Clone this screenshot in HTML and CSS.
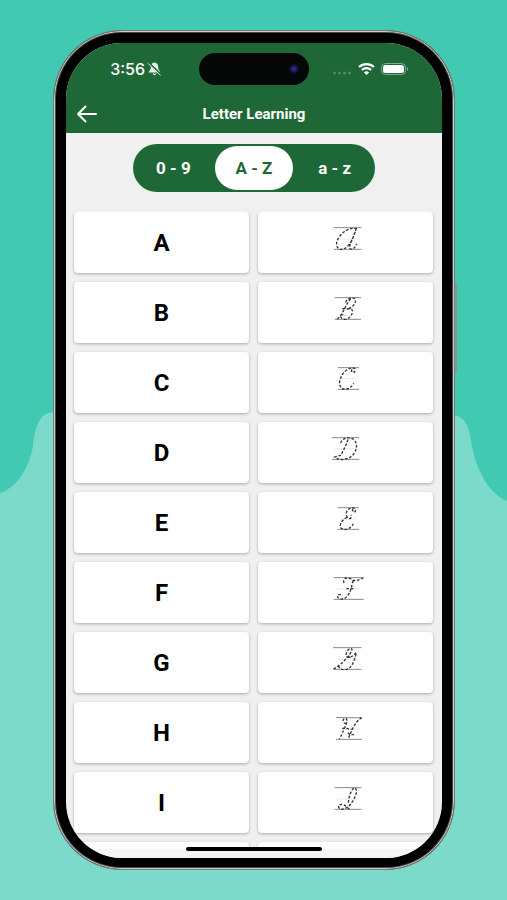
FILE: index.html
```html
<!DOCTYPE html>
<html lang="en">

<head>
    <meta charset="UTF-8">
    <meta name="viewport" content="width=device-width, initial-scale=1">
    <title>Letter Learning</title>
    <link rel="stylesheet" href="styles.css">
</head>

<body>
    <svg class="wave" viewBox="0 0 507 900" preserveAspectRatio="none" aria-hidden="true">
        <path d="M0 493C16 488 29 469 33 446C35 426 40 412 54 412L454 415C465 417 469 427 471 440C475 468 488 493 507 501V900H0Z" fill="#7cdaca" />
    </svg>

    <div class="phone">
        <div class="side-button"></div>
        <main class="screen">
            <header class="header">
                <div class="status">
                    <div class="status-left">
                        <span class="time">3:56</span>
                        <svg width="15" height="14" viewBox="0 0 15 14" aria-hidden="true">
                            <path d="M7.5 .5C4.8 .5 3.8 2.7 3.8 5.2C3.8 7.8 2.4 8.6 1.8 9.8V10.6H13.2V9.8C12.6 8.6 11.2 7.8 11.2 5.2C11.2 2.7 10.2 .5 7.5 .5ZM5.6 11.5H9.4C9 13.8 6 13.8 5.6 11.5Z" fill="#e6efe8" />
                            <path d="M1.8 1L13.8 12.5" stroke="#1d6836" stroke-width="2" />
                            <path d="M1 1.4L13.2 13" stroke="#e6efe8" stroke-width="1" stroke-linecap="round" />
                        </svg>
                    </div>
                    <div class="island"><span class="camera"></span></div>
                    <div class="status-right">
                        <svg class="signal" width="20" height="12" viewBox="0 0 20 12" aria-hidden="true">
                            <circle cx="2.5" cy="10" r="1.5" />
                            <circle cx="7.5" cy="10" r="1.5" />
                            <circle cx="12.5" cy="10" r="1.5" />
                            <circle cx="17.5" cy="10" r="1.5" />
                        </svg>
                        <svg width="17" height="12" viewBox="0 0 17 12" fill="none" stroke="#fff" stroke-width="2.1" aria-hidden="true">
                            <path d="M1 4.1C5.2 .1 11.8 .1 16 4.1" />
                            <path d="M3.8 7C6.5 4.5 10.5 4.5 13.2 7" />
                            <path d="M8.5 12L5.9 9.4C7.4 8 9.6 8 11.1 9.4Z" fill="#fff" stroke="none" />
                        </svg>
                        <svg width="28" height="12" viewBox="0 0 28 12" aria-hidden="true">
                            <rect x=".5" y=".5" width="24" height="11" rx="4" fill="none" stroke="#82aa8f" />
                            <rect x="2" y="2" width="21" height="8" rx="2.5" fill="#fff" />
                            <path d="M26 4C27.6 4.500 27.6 7.500 26 8Z" fill="#82aa8f" />
                        </svg>
                    </div>
                </div>
                <div class="title-bar">
                    <button class="back" type="button" aria-label="Back">
                        <svg width="22" height="18" viewBox="0 0 22 18" fill="none" stroke="#fff" stroke-width="2" stroke-linecap="round" stroke-linejoin="round">
                            <path d="M20 9H2M9.500 1.500L2 9L9.500 16.500" />
                        </svg>
                    </button>
                    <h1 class="title">Letter Learning</h1>
                </div>
            </header>

            <nav class="tabs">
                <button class="tab" type="button">0 - 9</button>
                <button class="tab active" type="button">A - Z</button>
                <button class="tab" type="button">a - z</button>
            </nav>

            <div class="letters">
                <div class="card">A</div>
                <div class="card">
                    <svg class="trace" viewBox="17 33 120 78" aria-label="A">
                        <path class="line" d="M40 38H123M40 103H123" />
                        <path class="middle" d="M48 72H119" />
                        <path class="letter" d="M110 41C80 35 55 60 49 82C46 104 65 110 82 94C96 78 100 62 107 43C101 65 88 86 87 98C94 109 104 99 109 86" />
                    </svg>
                </div>
                <div class="card">B</div>
                <div class="card">
                    <svg class="trace" viewBox="17 33 120 78" aria-label="B">
                        <path class="line" d="M43 38H122M43 103H122" />
                        <path class="middle" d="M57 71H114" />
                        <path class="letter" d="M76 52C82 38 100 34 105 43C108 57 96 68 80 72C98 68 101 80 91 93C82 106 65 107 60 93C62 87 69 88 75 92M51 102C70 86 74 61 91 41M66 71H80" />
                    </svg>
                </div>
                <div class="card">C</div>
                <div class="card">
                    <svg class="trace" viewBox="17 33 120 78" aria-label="C">
                        <path class="line" d="M52 38H116M52 103H116" />
                        <path class="middle" d="M63 71H108" />
                        <path class="letter" d="M94 43V51H103V40C82 34 61 58 58 80C56 99 69 106 83 101C91 98 96 92 100 85" />
                    </svg>
                </div>
                <div class="card">D</div>
                <div class="card">
                    <svg class="trace" viewBox="17 33 120 78" aria-label="D">
                        <path class="line" d="M35 38H117M35 103H117" />
                        <path class="middle" d="M43 71H109" />
                        <path class="letter" d="M61 54C65 38 88 34 101 44C119 64 102 95 80 101C66 106 51 104 43 96C54 91 62 95 65 84C72 70 80 57 83 41" />
                    </svg>
                </div>
                <div class="card">E</div>
                <div class="card">
                    <svg class="trace" viewBox="17 33 120 78" aria-label="E">
                        <path class="line" d="M52 38H116M52 103H116" />
                        <path class="middle" d="M61 72H108" />
                        <path class="letter" d="M96 42L99 51C105 54 107 46 104 40C87 33 72 51 80 65C88 76 97 68 91 60M80 67C63 75 56 91 62 99C76 111 94 97 99 86" />
                    </svg>
                </div>
                <div class="card">F</div>
                <div class="card">
                    <svg class="trace" viewBox="17 33 120 78" aria-label="F">
                        <path class="line" d="M40 38H130M40 103H130" />
                        <path class="middle" d="M50 72H121" />
                        <path class="letter" d="M71 54C66 39 80 36 92 42C105 52 117 44 129 39M98 47L92 72C87 87 77 101 67 102C54 104 47 93 54 89H64M78 71H103" />
                    </svg>
                </div>
                <div class="card">G</div>
                <div class="card">
                    <svg class="trace" viewBox="17 33 120 78" aria-label="G">
                        <path class="line" d="M38 38H123M38 103H123" />
                        <path class="middle" d="M54 72H114" />
                        <path class="letter" d="M40 102C64 88 91 60 95 43C88 34 76 52 77 63C85 73 98 63 108 53C103 78 93 103 75 104C59 106 52 93 55 87M82 66L94 68" />
                    </svg>
                </div>
                <div class="card">H</div>
                <div class="card">
                    <svg class="trace" viewBox="17 33 120 78" aria-label="H">
                        <path class="line" d="M47 38H125M47 103H125" />
                        <path class="middle" d="M55 72H120" />
                        <path class="letter" d="M78 55C66 57 65 40 76 40C86 45 76 60 58 102M124 38C106 48 94 75 84 101M66 71C78 64 85 77 97 72M83 83L88 89H103" />
                    </svg>
                </div>
                <div class="card">I</div>
                <div class="card">
                    <svg class="trace" viewBox="17 33 120 78" aria-label="I">
                        <path class="line" d="M43 38H123M43 103H123" />
                        <path class="middle" d="M50 72H116" />
                        <path class="letter" d="M84 83C86 61 94 38 105 39C114 50 102 73 91 87C80 102 61 108 55 97C53 87 66 86 73 91L88 103" />
                    </svg>
                </div>
                <div class="card"></div>
                <div class="card"></div>
            </div>

            <div class="safe-area"></div>
            <div class="home-indicator"></div>
        </main>
    </div>
</body>

</html>
```

FILE: styles.css
```css
* {
    box-sizing: border-box;
}

body {
    margin: 0;
    height: 100vh;
    padding: 30px 52px 30px 53px;
    background-color: #41c9b1;
    font-family: Roboto, sans-serif;
    overflow: hidden;
}

button {
    border: none;
    padding: 0;
    background: none;
    font-family: inherit;
    cursor: pointer;
}

.wave {
    position: absolute;
    top: 0;
    left: 0;
    width: 100%;
    height: 100%;
}

.phone {
    position: relative;
    height: 100%;
    padding: 12px 12px 11px;
    background-color: #000;
    border: 1px solid #777c7a;
    border-radius: 69px;
    box-shadow: inset 0 0 0 1px #d0cdcd, inset 0 0 0 2px #494747;
}

.side-button {
    position: absolute;
    top: 252px;
    right: -3px;
    width: 2px;
    height: 90px;
    background-color: #8b9794;
    border-radius: 0 2px 2px 0;
}

.screen {
    position: relative;
    display: flex;
    flex-direction: column;
    height: 100%;
    background-color: #f0f0f0;
    border-radius: 56px;
    overflow: hidden;
}

.header {
    padding-top: 10px;
    background-color: #1d6836;
    color: #fff;
}

.status {
    display: grid;
    grid-template-columns: 1fr 110px 1fr;
    align-items: center;
}

.status-left {
    display: flex;
    align-items: center;
    justify-content: flex-end;
    gap: 2px;
    padding-right: 37px;
}

.time {
    font-family: Inter, sans-serif;
    font-size: 16px;
    font-weight: 500;
    line-height: 20px;
}

.island {
    display: flex;
    align-items: center;
    justify-content: flex-end;
    height: 32px;
    padding-right: 10px;
    background-color: #060707;
    border-radius: 16px;
}

.camera {
    width: 10px;
    height: 10px;
    background: radial-gradient(circle, #2e2e86 15%, #12123f 50%, #090a18 75%);
    border-radius: 50%;
}

.status-right {
    display: flex;
    align-items: center;
    gap: 6px;
    padding-left: 23px;
}

.signal {
    fill: #4f8a64;
}

.title-bar {
    display: grid;
    grid-template-columns: 42px 1fr 42px;
    align-items: center;
    height: 48px;
    padding-top: 9px;
}

.back {
    display: flex;
    align-items: center;
    justify-content: center;
    height: 38px;
}

.title {
    margin: 0;
    font-size: 15px;
    font-weight: 700;
    text-align: center;
}

.tabs {
    display: grid;
    grid-template-columns: repeat(3, 1fr);
    align-self: center;
    width: 242px;
    margin: 11px 0 20px;
    padding: 2px 0;
    background-color: #1d6836;
    border-radius: 24px;
}

.tab {
    height: 44px;
    margin: 0 1px;
    border-radius: 22px;
    color: #fff;
    font-size: 17px;
    font-weight: 700;
}

.tab.active {
    background-color: #fff;
    color: #1d6836;
}

.letters {
    display: grid;
    grid-template-columns: 1fr 1fr;
    grid-auto-rows: 61px;
    gap: 9px;
    flex: 1;
    min-height: 0;
    padding: 0 9px 0 8px;
    overflow: hidden;
}

.card {
    display: flex;
    align-items: center;
    justify-content: center;
    background-color: #fff;
    border-radius: 4px;
    box-shadow: 0 1px 3px rgba(0, 0, 0, 0.3);
    color: #000;
    font-size: 24px;
    font-weight: 700;
}

.trace {
    width: 40px;
    height: 26px;
    margin-bottom: 7px;
    fill: none;
}

.line {
    stroke: #888;
    stroke-width: 3;
}

.middle {
    stroke: #ddd;
    stroke-width: 2;
}

.letter {
    stroke: #333;
    stroke-width: 4;
    stroke-dasharray: 8 5;
}

.safe-area {
    height: 9px;
    background-color: #f4f4f4;
}

.home-indicator {
    position: absolute;
    bottom: 7px;
    left: 50%;
    width: 136px;
    height: 4px;
    background-color: #000;
    border-radius: 2px;
    transform: translateX(-50%);
}
```
